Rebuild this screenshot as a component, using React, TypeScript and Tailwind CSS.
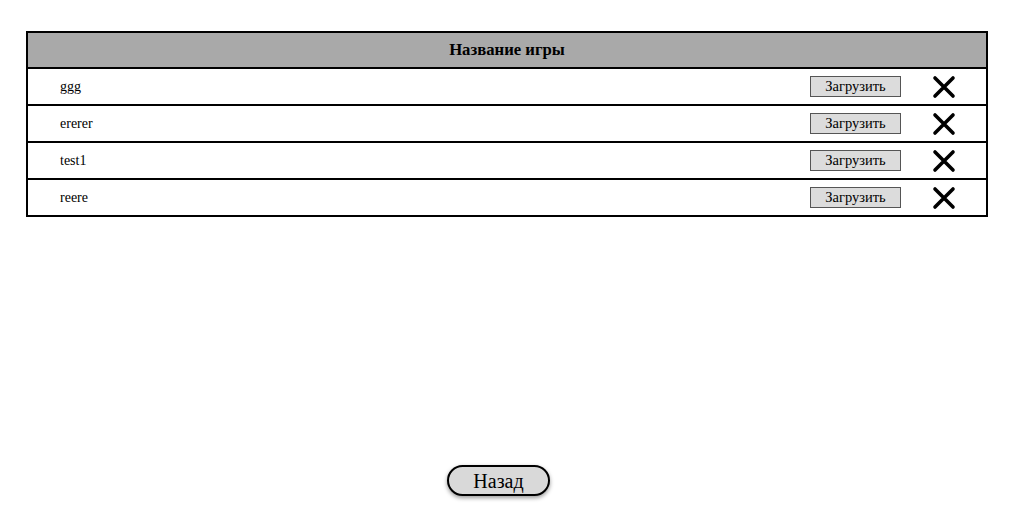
import React from "react";

const rows = ["ggg", "ererer", "test1", "reere"];

function XIcon() {
  return (
    <svg width="24" height="24" viewBox="0 0 24 24" className="block">
      <path d="M3 3 L21 21 M21 3 L3 21" stroke="black" strokeWidth="3.6" strokeLinecap="round" fill="none" />
    </svg>
  );
}

export default function App() {
  return (
    <div className="min-h-[524px] flex flex-col bg-white" style={{ fontFamily: '"Liberation Serif", serif' }}>
      <table className="ml-[26px] mt-[31px] w-[962px] border-collapse border-2 border-black">
        <thead>
          <tr className="h-[36px] bg-[#a9a9a9]">
            <th colSpan={3} className="border-2 border-black text-[16.7px] font-bold text-black text-center">
              Название игры
            </th>
          </tr>
        </thead>
        <tbody>
          {rows.map((r) => (
            <tr key={r} className="h-[37px] border-2 border-black">
              <td className="pl-[32px] text-[14px] text-black">{r}</td>
              <td className="w-[110px] pl-[10px]">
                <div className="w-[91px] h-[21px] border border-[#555] bg-[#dcdcdc] flex items-center justify-center text-[14.5px] text-black">
                  Загрузить
                </div>
              </td>
              <td className="w-[77px]">
                <div className="pl-[22px]">
                  <XIcon />
                </div>
              </td>
            </tr>
          ))}
        </tbody>
      </table>
      <div className="mt-auto mb-[28px] pl-[447px]">
        <button className="w-[103px] h-[31px] rounded-full border-2 border-black bg-[#d9d9d9] text-[20px] text-black shadow-[0_2px_4px_rgba(0,0,0,0.4)] flex items-center justify-center">
          Назад
        </button>
      </div>
    </div>
  );
}
